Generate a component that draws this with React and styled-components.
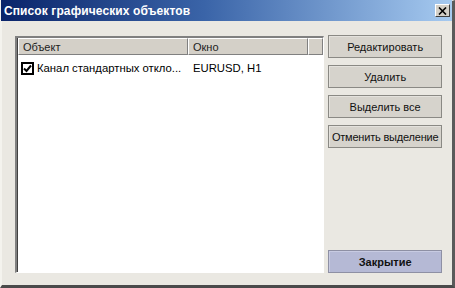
import React from "react";
import styled, { createGlobalStyle } from "styled-components";

const Global = createGlobalStyle`
  html, body { margin: 0; padding: 0; background: #eae8e2; }
  * { box-sizing: border-box; }
`;

const Window = styled.div`
  width: 455px;
  height: 288px;
  display: flex;
  flex-direction: column;
  background: #eae8e2;
  border-top: 1px solid #f4f3ee;
  border-left: 2px solid #f4f3ee;
  border-right: 3px solid #5a5a5a;
  border-bottom: 3px solid #4a4a4a;
  font-family: "Liberation Sans", Arial, sans-serif;
  font-size: 11px;
  color: #000;
`;

const TitleBar = styled.div`
  height: 21px;
  margin: -1px 0 0 -1px;
  padding: 0 2px 0 3px;
  display: flex;
  align-items: center;
  justify-content: space-between;
  background: linear-gradient(to right, #0a246a 0%, #3a64a8 45%, #a6caf0 100%);
`;

const Title = styled.div`
  color: #fff;
  font-weight: bold;
  font-size: 12px;
  letter-spacing: 0.1px;
`;

const CloseButton = styled.div`
  width: 15px;
  height: 13px;
  display: flex;
  align-items: center;
  justify-content: center;
  background: #d4d0c8;
  border-top: 1px solid #fff;
  border-left: 1px solid #fff;
  border-right: 1px solid #404040;
  border-bottom: 1px solid #404040;
`;

const Body = styled.div`
  flex: 1;
  display: flex;
  gap: 4px;
  padding: 14px 10px 12px 13px;
`;

const List = styled.div`
  width: 310px;
  margin-top: 1px;
  display: flex;
  flex-direction: column;
  background: #fff;
  border-top: 2px solid #808080;
  border-left: 2px solid #808080;
  border-right: 1px solid #fff;
  border-bottom: 1px solid #fff;
  box-shadow: inset 1px 1px 0 #404040;
`;

const Header = styled.div`
  display: flex;
  height: 17px;
  padding: 0 0 0 1px;
`;

const HeaderCell = styled.div`
  width: ${(p) => p.w}px;
  flex: ${(p) => (p.grow ? 1 : "none")};
  padding: 2px 0 0 4px;
  background: #d4d0c8;
  color: #222;
  border-top: 1px solid #fff;
  border-left: 1px solid #fff;
  border-right: 1px solid #808080;
  border-bottom: 1px solid #808080;
`;

const Row = styled.div`
  display: flex;
  align-items: center;
  height: 20px;
  margin-top: 3px;
  padding-left: 4px;
`;

const Check = styled.div`
  width: 13px;
  height: 13px;
  border: 2px solid #000;
  background: #fff;
  display: flex;
  align-items: center;
  justify-content: center;
  margin-right: 3px;
`;

const Cell = styled.div`
  width: ${(p) => p.w}px;
  white-space: nowrap;
  overflow: hidden;
  font-size: 11.3px;
`;

const Side = styled.div`
  width: 114px;
  display: flex;
  flex-direction: column;
  gap: 7px;
`;

const Button = styled.div`
  height: 23px;
  display: flex;
  align-items: center;
  justify-content: center;
  background: ${(p) => (p.primary ? "#b5b9d5" : "#d6d3cc")};
  border: 1px solid ${(p) => (p.primary ? "#8e90a4" : "#8a8984")};
  box-shadow: inset 1px 1px 0 ${(p) => (p.primary ? "#c8cbe2" : "#e4e2dd")};
  font-weight: ${(p) => (p.primary ? "bold" : "normal")};
  color: #111;
  white-space: nowrap;
  letter-spacing: ${(p) => (p.tight ? "-0.2px" : "0")};
`;

const Spacer = styled.div`
  flex: 1;
`;

export default function App() {
  return (
    <>
      <Global />
      <Window>
        <TitleBar>
          <Title>Список графических объектов</Title>
          <CloseButton>
            <svg width="9" height="8" viewBox="0 0 9 8">
              <path d="M1 0.5 L8 7.5 M8 0.5 L1 7.5" stroke="#000" strokeWidth="1.6" />
            </svg>
          </CloseButton>
        </TitleBar>
        <Body>
          <List>
            <Header>
              <HeaderCell w={170}>Объект</HeaderCell>
              <HeaderCell w={120}>Окно</HeaderCell>
              <HeaderCell grow>{" "}</HeaderCell>
            </Header>
            <Row>
              <Check>
                <svg width="9" height="9" viewBox="0 0 9 9">
                  <path d="M1 4.5 L3.5 7 L8 1.5" stroke="#000" strokeWidth="2" fill="none" />
                </svg>
              </Check>
              <Cell w={156}>Канал стандартных откло...</Cell>
              <Cell w={110}>EURUSD, H1</Cell>
            </Row>
          </List>
          <Side>
            <Button>Редактировать</Button>
            <Button>Удалить</Button>
            <Button>Выделить все</Button>
            <Button tight>Отменить выделение</Button>
            <Spacer />
            <Button primary>Закрытие</Button>
          </Side>
        </Body>
      </Window>
    </>
  );
}
